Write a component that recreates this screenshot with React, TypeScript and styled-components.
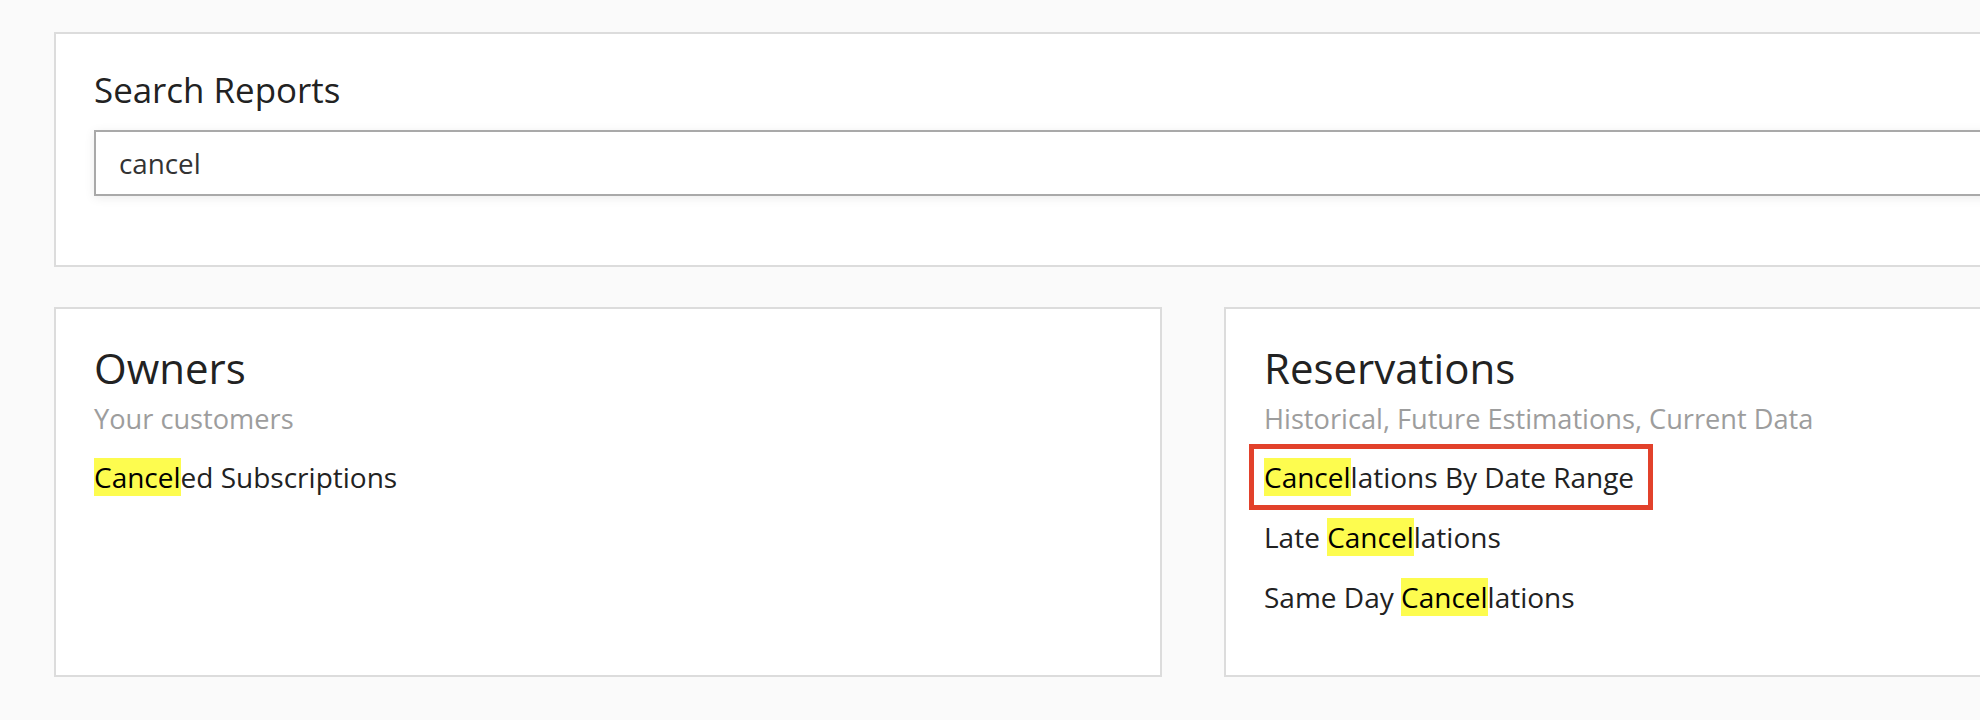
import React from "react";
import styled, { createGlobalStyle } from "styled-components";

const GlobalStyle = createGlobalStyle`
  html, body {
    margin: 0;
    padding: 0;
    background: #fafafa;
    overflow: hidden;
  }
  body {
    font-family: "Open Sans", "Noto Sans", "Liberation Sans", sans-serif;
    color: #222;
  }
  * { box-sizing: border-box; }
`;

const Page = styled.main`
  display: flex;
  flex-direction: column;
  gap: 40px;
  width: 2334px;
  padding: 32px 0 0 54px;
`;

const Card = styled.section<{ $padBottom: number }>`
  background: #fff;
  border: 2px solid #dcdcdc;
  padding: 32px 38px ${(p) => p.$padBottom}px;
`;

const SearchTitle = styled.h2`
  margin: 0;
  font-size: 34.9px;
  line-height: 48px;
  font-weight: 400;
  color: #222;
`;

const SearchInput = styled.input`
  display: block;
  width: 100%;
  height: 66px;
  margin-top: 16px;
  padding: 0 23px;
  border: 2px solid #a9a9a9;
  border-radius: 0;
  background: #fff;
  box-shadow: 0 2px 10px rgba(0, 0, 0, 0.08);
  font-family: "Open Sans", "Noto Sans", "Liberation Sans", sans-serif;
  font-size: 27.8px;
  color: #333;
  outline: none;
`;

const Grid = styled.div`
  display: grid;
  grid-template-columns: 1108px 1108px;
  column-gap: 62px;
`;

const CardTitle = styled.h3`
  margin: 0;
  font-size: 42px;
  line-height: 54px;
  font-weight: 400;
  color: #222;
`;

const CardSubtitle = styled.p`
  margin: 5px 0 0;
  font-size: 27.2px;
  line-height: 38px;
  color: #9d9d9d;
`;

const ReportList = styled.ul`
  list-style: none;
  margin: 20px 0 0;
  padding: 0;
  display: flex;
  flex-direction: column;
  align-items: flex-start;
  gap: 22px;
`;

const ReportItem = styled.li<{ $annotated?: boolean }>`
  position: relative;
  font-size: 28px;
  line-height: 38px;
  color: #222;
  cursor: pointer;
  ${(p) =>
    p.$annotated &&
    `
    &::after {
      content: "";
      position: absolute;
      left: -15px;
      right: -19px;
      top: -14px;
      bottom: -14px;
      border: 5px solid #e2412b;
      pointer-events: none;
    }
  `}
`;

const Mark = styled.mark`
  background: #fdfc4f;
  color: #000;
`;

type Report = { before: string; match: string; after: string; annotated?: boolean };

const Highlighted: React.FC<{ r: Report }> = ({ r }) => (
  <>
    {r.before}
    <Mark>{r.match}</Mark>
    {r.after}
  </>
);

const groups: { title: string; subtitle: string; reports: Report[] }[] = [
  {
    title: "Owners",
    subtitle: "Your customers",
    reports: [{ before: "", match: "Cancel", after: "ed Subscriptions" }],
  },
  {
    title: "Reservations",
    subtitle: "Historical, Future Estimations, Current Data",
    reports: [
      { before: "", match: "Cancel", after: "lations By Date Range", annotated: true },
      { before: "Late ", match: "Cancel", after: "lations" },
      { before: "Same Day ", match: "Cancel", after: "lations" },
    ],
  },
];

export default function App() {
  return (
    <>
      <GlobalStyle />
      <Page>
        <Card $padBottom={69}>
          <SearchTitle>Search Reports</SearchTitle>
          <SearchInput defaultValue="cancel" aria-label="Search Reports" />
        </Card>
        <Grid>
          {groups.map((g) => (
            <Card key={g.title} $padBottom={59}>
              <CardTitle>{g.title}</CardTitle>
              <CardSubtitle>{g.subtitle}</CardSubtitle>
              <ReportList>
                {g.reports.map((r, i) => (
                  <ReportItem key={i} $annotated={r.annotated}>
                    <Highlighted r={r} />
                  </ReportItem>
                ))}
              </ReportList>
            </Card>
          ))}
        </Grid>
      </Page>
    </>
  );
}
